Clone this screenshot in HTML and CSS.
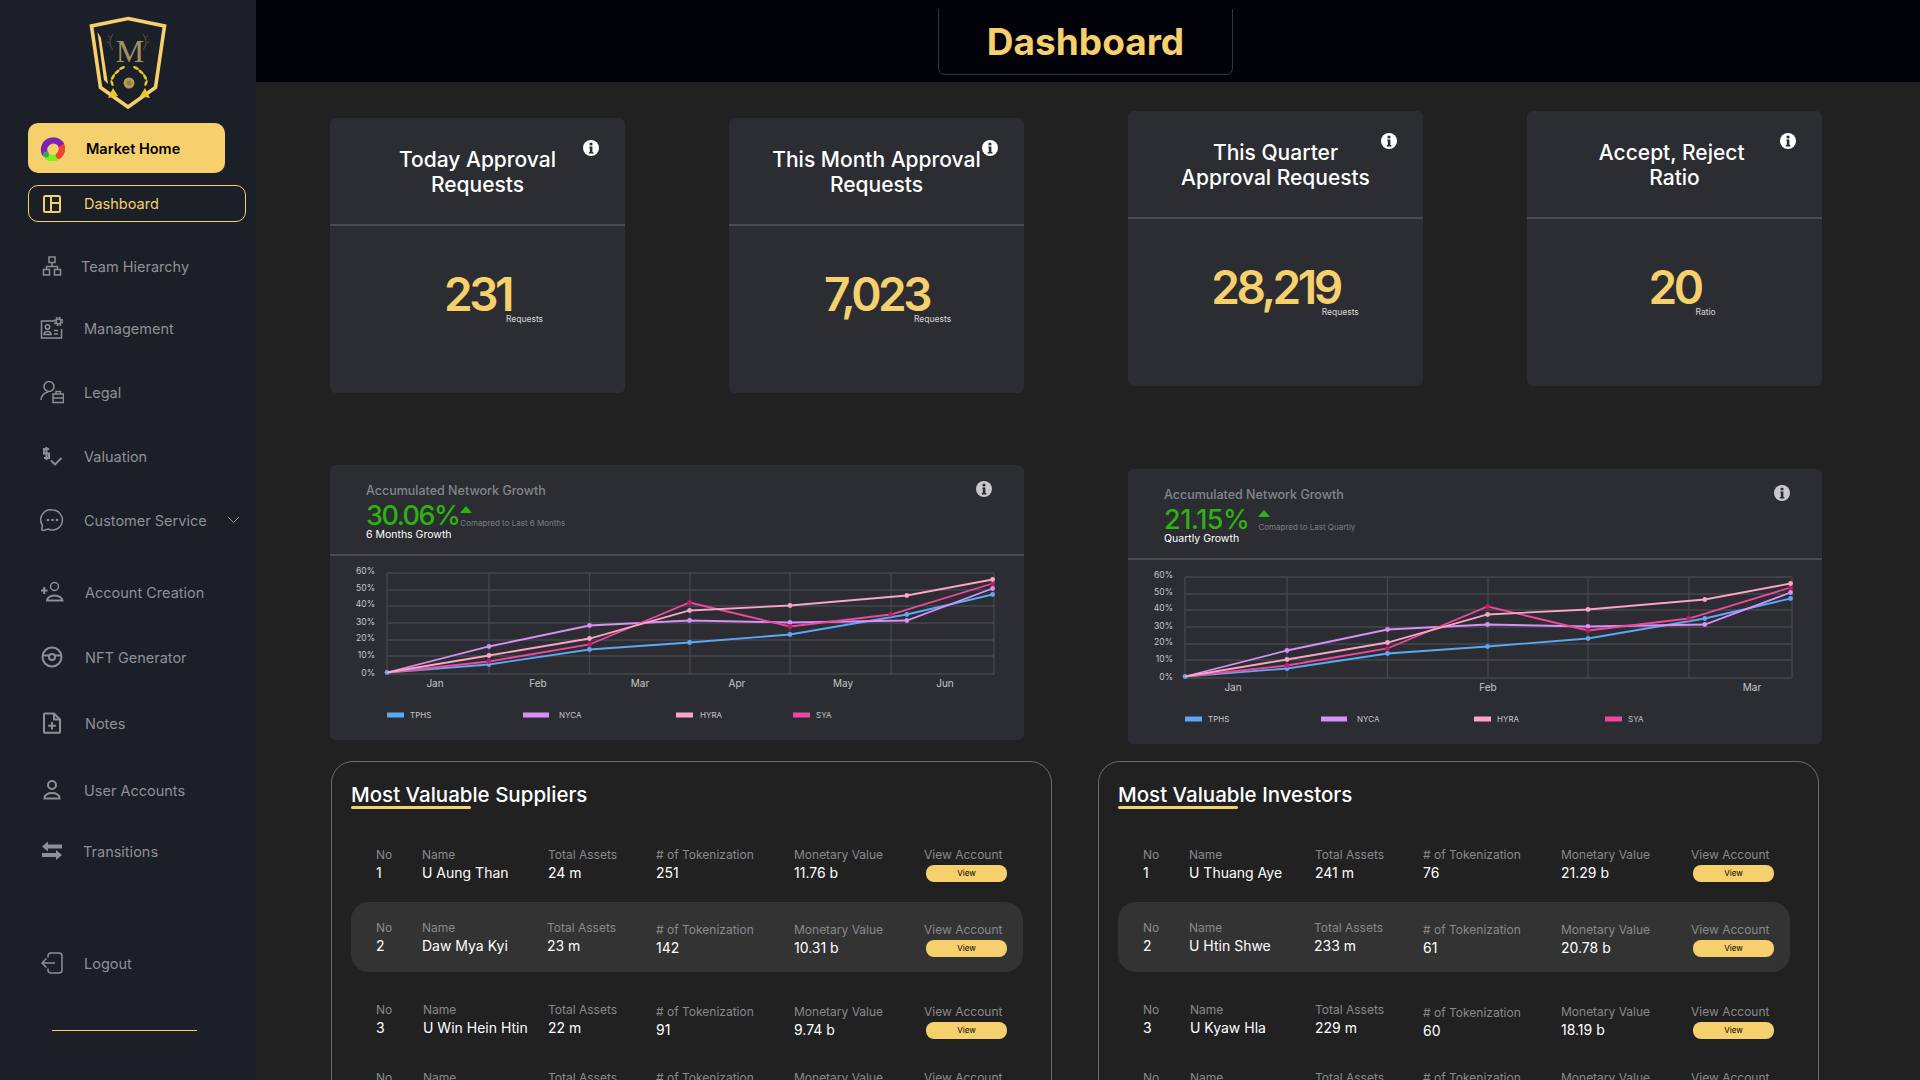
FILE: index.html
```html
<!DOCTYPE html>
<html lang="en">
<head>
  <meta charset="UTF-8" />
  <title>Dashboard</title>
  <link rel="stylesheet" href="styles.css">
</head>
<body>
  <svg class="sprites" width="0" height="0">
    <defs>
      <symbol id="info" viewBox="0 0 16 16">
        <circle cx="8" cy="8" r="8" fill="currentColor" />
        <circle cx="8" cy="4" r="1.600" fill="#2c2d33" />
        <path d="M6.400 6.600h3v5.400h1v1.500H5.800V12h1V8h-.4z" fill="#2c2d33" />
      </symbol>
      <symbol id="plot" viewBox="0 0 694 184">
        <path class="grid" d="M57 17H664M57 34H664M57 50H664M57 67H664M57 84H664M57 100H664M57 118H664M57 17V118M159 17V118M259.500 17V118M360 17V118M460 17V118M561 17V118M664 17V118" />
        <polyline class="line tphs" points="57,116.500 159,108.500 259.500,93.500 359.600,86.500 460,78.500 576.800,58.500 662.600,38.500" />
        <g class="dots tphs"><circle cx="57" cy="116.500" r="2.400" /><circle cx="159" cy="108.500" r="2.400" /><circle cx="259.500" cy="93.500" r="2.400" /><circle cx="359.600" cy="86.500" r="2.400" /><circle cx="460" cy="78.500" r="2.400" /><circle cx="576.800" cy="58.500" r="2.400" /><circle cx="662.600" cy="38.500" r="2.400" /></g>
        <polyline class="line nyca" points="57,116.500 159,90.500 259.500,69.500 359.600,64.500 460,66.500 576.800,64.500 662.600,32.500" />
        <g class="dots nyca"><circle cx="159" cy="90.500" r="2.400" /><circle cx="259.500" cy="69.500" r="2.400" /><circle cx="359.600" cy="64.500" r="2.400" /><circle cx="460" cy="66.500" r="2.400" /><circle cx="576.800" cy="64.500" r="2.400" /><circle cx="662.600" cy="32.500" r="2.400" /></g>
        <polyline class="line sya" points="57,116.500 159,105.500 259.500,88.500 359.600,46.500 460,70.500 560.700,58.500 662.600,27.500" />
        <g class="dots sya-dot"><circle cx="159" cy="105.500" r="2.400" /><circle cx="259.500" cy="88.500" r="2.400" /><circle cx="359.600" cy="46.500" r="2.400" /><circle cx="460" cy="70.500" r="2.400" /><circle cx="560.700" cy="58.500" r="2.400" /><circle cx="662.600" cy="27.500" r="2.400" /></g>
        <polyline class="line hyra" points="57,116.500 159,99.500 259.500,82.500 359.600,54.500 460,49.500 576.800,39.500 662.600,23.500" />
        <g class="dots hyra"><circle cx="159" cy="99.500" r="2.400" /><circle cx="259.500" cy="82.500" r="2.400" /><circle cx="359.600" cy="54.500" r="2.400" /><circle cx="460" cy="49.500" r="2.400" /><circle cx="576.800" cy="39.500" r="2.400" /><circle cx="662.600" cy="23.500" r="2.400" /></g>
        <rect class="tphs-box" x="57" y="156.500" width="17" height="5" />
        <rect class="nyca-box" x="193" y="156.500" width="26" height="5" />
        <rect class="hyra-box" x="346" y="156.500" width="17" height="5" />
      </symbol>
    </defs>
  </svg>

  <div class="app">
    <aside class="sidebar">
      <svg class="logo" width="78" height="96" viewBox="89 15 78 96">
        <polygon points="128,18.500 164.500,26 155.500,87.500 128,107 100.500,87.500 91.500,26" fill="none" stroke="#f6d06c" stroke-width="3.600" />
        <polygon points="97.500,32 101,38 108,84 104,80" fill="#f6d06c" />
        <text x="130" y="62" class="logo-m">M</text>
        <path d="M113 34c-4 5-4 11 0 16M112 38l-4-2M111 43l-4-1M143 34c4 5 4 11 0 16M144 38l4-2M145 43l4-1" fill="none" stroke="#4d4833" stroke-width="1.200" />
        <circle cx="129" cy="83" r="5.500" fill="#b39a55" />
        <circle cx="129" cy="83" r="2.400" fill="#95803f" />
        <g fill="#e7c92d">
          <ellipse cx="122" cy="68" rx="3.200" ry="1.300" transform="rotate(-25 122 68)" />
          <ellipse cx="117" cy="72" rx="3.200" ry="1.300" transform="rotate(-40 117 72)" />
          <ellipse cx="113" cy="77" rx="3.200" ry="1.300" transform="rotate(-60 113 77)" />
          <ellipse cx="112" cy="83" rx="3.200" ry="1.300" transform="rotate(70 112 83)" />
          <ellipse cx="136" cy="68" rx="3.200" ry="1.300" transform="rotate(25 136 68)" />
          <ellipse cx="141" cy="72" rx="3.200" ry="1.300" transform="rotate(40 141 72)" />
          <ellipse cx="145" cy="77" rx="3.200" ry="1.300" transform="rotate(60 145 77)" />
          <ellipse cx="146" cy="83" rx="3.200" ry="1.300" transform="rotate(-70 146 83)" />
          <path d="M113 88l-5 10 10-2zM145 88l5 10-10-2z" />
        </g>
      </svg>

      <a class="market-btn" href="#">
        <svg width="25" height="25" viewBox="0 0 25 25" fill="none" stroke-width="6.400">
          <path d="M19 19.500a9.250 9.250 0 0 1-12.500 .5" stroke="#7df01c" />
          <path d="M21.300 9.500a9.250 9.250 0 0 1-2.300 10" stroke="#ef4136" stroke-linecap="round" />
          <path d="M5.200 18.200a9.250 9.250 0 1 1 16.200-9" stroke="#7b22b5" />
          <circle cx="6" cy="18.600" r="3" fill="#2fa84f" stroke="none" />
        </svg>
        <span>Market Home</span>
      </a>

      <a class="dash-btn" href="#">
        <svg width="18" height="18" viewBox="0 0 18 18" fill="none" stroke="#f6d06c" stroke-width="2">
          <rect x="1" y="1" width="16" height="16" rx="1.500" />
          <path d="M8 1v16M8 8h9" />
        </svg>
        <span>Dashboard</span>
      </a>

      <nav class="nav">
        <a class="nav-item" href="#">
          <svg class="nav-icon" width="24" height="24" viewBox="0 0 24 24"><rect x="9" y="3" width="6" height="5.500" /><path d="M12 8.500v4M6.500 15.500v-3h11v3" /><rect x="3.500" y="15.500" width="6" height="5.500" /><rect x="14.500" y="15.500" width="6" height="5.500" /></svg>
          <span class="nav-team">Team Hierarchy</span>
        </a>
        <a class="nav-item step-up" href="#">
          <svg class="nav-icon" width="24" height="24" viewBox="0 0 24 24"><path d="M14 5H1.500v17h20v-9" /><circle cx="7.500" cy="11" r="2.200" /><path d="M4 18.500c0-4 7-4 7 0zM14 14.500h4M14 18h4" /><circle cx="18.500" cy="5.500" r="2.500" /><circle cx="18.500" cy="5.500" r="4" stroke-dasharray="2 1.100" /></svg>
          <span>Management</span>
        </a>
        <a class="nav-item" href="#">
          <svg class="nav-icon" width="24" height="24" viewBox="0 0 24 24"><circle cx="9" cy="6.500" r="5" /><path d="M1 20c0-4 3-7.500 7-8" /><rect x="13" y="14" width="10.500" height="8.500" /><path d="M16 14v-2.500h4.500V14M13 18h10.500" /></svg>
          <span>Legal</span>
        </a>
        <a class="nav-item" href="#">
          <svg class="nav-icon" width="24" height="24" viewBox="0 0 24 24"><path d="M9 5H4v4.500h5V14H4M6.500 3v13" stroke-width="2" /><path d="M11 16.500l4 4 6.500-6.500" stroke-width="1.800" /></svg>
          <span>Valuation</span>
        </a>
        <a class="nav-item" href="#">
          <svg class="nav-icon" width="24" height="24" viewBox="0 0 24 24"><path d="M12.500 2a10 10 0 1 1-4.500 19l-4.500 1.500c-1 0-1.800-.6-1.800-1.500l.8-3.500A10 10 0 0 1 12.500 2z" /><circle cx="8" cy="12" r=".6" /><circle cx="12.500" cy="12" r=".6" /><circle cx="17" cy="12" r=".6" /></svg>
          <span class="nav-nowrap">Customer Service</span>
          <svg class="nav-chevron" width="13" height="8" viewBox="0 0 13 8"><path d="M1 1l5.500 5.500L12 1" /></svg>
        </a>
        <a class="nav-item wide step-large" href="#">
          <svg class="nav-icon" width="24" height="24" viewBox="0 0 24 24"><circle cx="14.500" cy="6.500" r="4" /><path d="M7 20.500c0-2 2.500-5 7.500-5s8 3 8 5zM1 10.500h6.500M4.200 7v7" stroke-width="2" /></svg>
          <span>Account Creation</span>
        </a>
        <a class="nav-item wide step-a" href="#">
          <svg class="nav-icon" width="24" height="24" viewBox="0 0 24 24"><circle cx="12" cy="12" r="9.500" stroke-width="2" /><circle cx="12" cy="12" r="3" stroke-width="2" /><path d="M3 10.500h6M15 10.500h6" stroke-width="2" /></svg>
          <span>NFT Generator</span>
        </a>
        <a class="nav-item wide step-b" href="#">
          <svg class="nav-icon" width="24" height="24" viewBox="0 0 24 24"><path d="M5 2.500h9l6 6V21a.8.8 0 0 1-.8.800H4.800A.8.800 0 0 1 4 21V3.500a1 1 0 0 1 1-1zM14 2.500v6h6M12 11v7.500M8.200 14.800h7.600" stroke-width="2" /></svg>
          <span>Notes</span>
        </a>
        <a class="nav-item step-c" href="#">
          <svg class="nav-icon" width="24" height="24" viewBox="0 0 24 24"><circle cx="12" cy="7" r="4" stroke-width="2" /><path d="M4.500 20.500v-1c0-2.500 3.500-4.500 7.500-4.500s7.500 2 7.500 4.500v1z" stroke-width="2" /></svg>
          <span>User Accounts</span>
        </a>
        <a class="nav-item tight step-d" href="#">
          <svg class="nav-icon" width="24" height="24" viewBox="0 0 24 24"><path d="M22 7.500H8M2 16h14" stroke-width="4" /><path class="solid" d="M8 2.500L2 7.500 8 12.500zM16 11l6 5-6 5z" /></svg>
          <span>Transitions</span>
        </a>
        <a class="nav-item step-e" href="#">
          <svg class="nav-icon" width="24" height="24" viewBox="0 0 24 24"><path d="M8 6.500V5a3 3 0 0 1 3-3h8a3 3 0 0 1 3 3v14a3 3 0 0 1-3 3h-8a3 3 0 0 1-3-3v-1.500M15 12H2M6.500 7.500L2 12l4.500 4.500" /></svg>
          <span>Logout</span>
        </a>
      </nav>
      <div class="side-line"></div>
    </aside>

    <main class="main">
      <header class="topbar">
        <h1 class="page-title">Dashboard</h1>
      </header>

      <div class="content">
        <section class="stat-row">
          <article class="stat-card low">
            <svg class="info" width="16" height="16"><use href="#info" /></svg>
            <h2 class="stat-title">Today Approval<br>Requests</h2>
            <div class="stat-body"><div class="stat-value">231<span class="stat-note">Requests</span></div></div>
          </article>
          <article class="stat-card low">
            <svg class="info" width="16" height="16"><use href="#info" /></svg>
            <h2 class="stat-title">This Month Approval<br>Requests</h2>
            <div class="stat-body"><div class="stat-value">7,023<span class="stat-note long">Requests</span></div></div>
          </article>
          <article class="stat-card">
            <svg class="info" width="16" height="16"><use href="#info" /></svg>
            <h2 class="stat-title">This Quarter<br>Approval Requests</h2>
            <div class="stat-body"><div class="stat-value">28,219<span class="stat-note longer">Requests</span></div></div>
          </article>
          <article class="stat-card">
            <svg class="info" width="16" height="16"><use href="#info" /></svg>
            <h2 class="stat-title">Accept, Reject&nbsp;<br>Ratio</h2>
            <div class="stat-body"><div class="stat-value">20<span class="stat-note">Ratio</span></div></div>
          </article>
        </section>

        <section class="chart-row">
          <article class="chart-card">
            <svg class="info muted" width="16" height="16"><use href="#info" /></svg>
            <div class="chart-head">
              <div class="chart-title">Accumulated Network Growth</div>
              <div class="growth">
                <span class="growth-pct">30.06%</span>
                <div class="growth-side">
                  <span class="triangle"></span>
                  <span class="growth-note">Comapred to Last 6 Months</span>
                </div>
              </div>
              <div class="growth-label">6 Months Growth</div>
            </div>
            <svg class="plot" width="694" height="184" viewBox="0 0 694 184">
              <use href="#plot" width="694" height="184" />
              <g class="y-labels"><text x="45" y="18">60%</text><text x="45" y="35">50%</text><text x="45" y="51">40%</text><text x="45" y="69">30%</text><text x="45" y="85">20%</text><text x="45" y="102">10%</text><text x="45" y="120">0%</text></g>
              <g class="x-labels"><text x="105" y="131">Jan</text><text x="208" y="131">Feb</text><text x="310" y="131">Mar</text><text x="407" y="131">Apr</text><text x="513" y="131">May</text><text x="615" y="131">Jun</text></g>
              <rect class="sya-box" x="463" y="156.500" width="17" height="5" />
              <g class="legend"><text x="80" y="162">TPHS</text><text x="229" y="162">NYCA</text><text x="370" y="162">HYRA</text><text x="486" y="162">SYA</text></g>
            </svg>
          </article>

          <article class="chart-card low-small">
            <svg class="info muted" width="16" height="16"><use href="#info" /></svg>
            <div class="chart-head">
              <div class="chart-title">Accumulated Network Growth</div>
              <div class="growth">
                <span class="growth-pct wide">21.15%</span>
                <div class="growth-side spaced">
                  <span class="triangle"></span>
                  <span class="growth-note">Comapred to Last Quartly</span>
                </div>
              </div>
              <div class="growth-label">Quartly Growth</div>
            </div>
            <svg class="plot" width="694" height="184" viewBox="0 0 694 184">
              <use href="#plot" width="694" height="184" />
              <g class="y-labels"><text x="45" y="18">60%</text><text x="45" y="35">50%</text><text x="45" y="51">40%</text><text x="45" y="69">30%</text><text x="45" y="85">20%</text><text x="45" y="102">10%</text><text x="45" y="120">0%</text></g>
              <g class="x-labels"><text x="105" y="131">Jan</text><text x="360" y="131">Feb</text><text x="624" y="131">Mar</text></g>
              <rect class="sya-box" x="477" y="156.500" width="17" height="5" />
              <g class="legend"><text x="80" y="162">TPHS</text><text x="229" y="162">NYCA</text><text x="369" y="162">HYRA</text><text x="500" y="162">SYA</text></g>
            </svg>
          </article>
        </section>

        <section class="table-row">
          <article class="panel">
            <h2 class="panel-title">Most Valuable Suppliers</h2>
            <div class="rows">
              <div class="row">
                <div class="cell"><span class="lbl">No</span><span class="val">1</span></div>
                <div class="cell"><span class="lbl">Name</span><span class="val">U Aung Than</span></div>
                <div class="cell"><span class="lbl">Total Assets</span><span class="val">24 m</span></div>
                <div class="cell"><span class="lbl"># of Tokenization</span><span class="val">251</span></div>
                <div class="cell"><span class="lbl">Monetary Value</span><span class="val">11.76 b</span></div>
                <div class="cell"><span class="lbl">View Account</span><a class="view-btn" href="#">View</a></div>
              </div>
              <div class="row active">
                <div class="cell"><span class="lbl">No</span><span class="val">2</span></div>
                <div class="cell"><span class="lbl">Name</span><span class="val">Daw Mya Kyi</span></div>
                <div class="cell shift"><span class="lbl">Total Assets</span><span class="val">23 m</span></div>
                <div class="cell drop"><span class="lbl"># of Tokenization</span><span class="val">142</span></div>
                <div class="cell drop"><span class="lbl">Monetary Value</span><span class="val">10.31 b</span></div>
                <div class="cell drop"><span class="lbl">View Account</span><a class="view-btn" href="#">View</a></div>
              </div>
              <div class="row third">
                <div class="cell"><span class="lbl">No</span><span class="val">3</span></div>
                <div class="cell nudge"><span class="lbl">Name</span><span class="val">U Win Hein Htin</span></div>
                <div class="cell"><span class="lbl">Total Assets</span><span class="val">22 m</span></div>
                <div class="cell drop"><span class="lbl"># of Tokenization</span><span class="val">91</span></div>
                <div class="cell drop"><span class="lbl">Monetary Value</span><span class="val">9.74 b</span></div>
                <div class="cell drop"><span class="lbl">View Account</span><a class="view-btn" href="#">View</a></div>
              </div>
              <div class="row fourth">
                <div class="cell"><span class="lbl">No</span></div>
                <div class="cell nudge"><span class="lbl">Name</span></div>
                <div class="cell"><span class="lbl">Total Assets</span></div>
                <div class="cell"><span class="lbl"># of Tokenization</span></div>
                <div class="cell"><span class="lbl">Monetary Value</span></div>
                <div class="cell"><span class="lbl">View Account</span></div>
              </div>
            </div>
          </article>

          <article class="panel">
            <h2 class="panel-title">Most Valuable Investors</h2>
            <div class="rows">
              <div class="row">
                <div class="cell"><span class="lbl">No</span><span class="val">1</span></div>
                <div class="cell"><span class="lbl">Name</span><span class="val">U Thuang Aye</span></div>
                <div class="cell"><span class="lbl">Total Assets</span><span class="val">241 m</span></div>
                <div class="cell"><span class="lbl"># of Tokenization</span><span class="val">76</span></div>
                <div class="cell"><span class="lbl">Monetary Value</span><span class="val">21.29 b</span></div>
                <div class="cell"><span class="lbl">View Account</span><a class="view-btn" href="#">View</a></div>
              </div>
              <div class="row active">
                <div class="cell"><span class="lbl">No</span><span class="val">2</span></div>
                <div class="cell"><span class="lbl">Name</span><span class="val">U Htin Shwe</span></div>
                <div class="cell shift"><span class="lbl">Total Assets</span><span class="val">233 m</span></div>
                <div class="cell drop"><span class="lbl"># of Tokenization</span><span class="val">61</span></div>
                <div class="cell drop"><span class="lbl">Monetary Value</span><span class="val">20.78 b</span></div>
                <div class="cell drop"><span class="lbl">View Account</span><a class="view-btn" href="#">View</a></div>
              </div>
              <div class="row third">
                <div class="cell"><span class="lbl">No</span><span class="val">3</span></div>
                <div class="cell nudge"><span class="lbl">Name</span><span class="val">U Kyaw Hla</span></div>
                <div class="cell"><span class="lbl">Total Assets</span><span class="val">229 m</span></div>
                <div class="cell drop-more"><span class="lbl"># of Tokenization</span><span class="val">60</span></div>
                <div class="cell drop"><span class="lbl">Monetary Value</span><span class="val">18.19 b</span></div>
                <div class="cell drop"><span class="lbl">View Account</span><a class="view-btn" href="#">View</a></div>
              </div>
              <div class="row fourth">
                <div class="cell"><span class="lbl">No</span></div>
                <div class="cell nudge"><span class="lbl">Name</span></div>
                <div class="cell"><span class="lbl">Total Assets</span></div>
                <div class="cell"><span class="lbl"># of Tokenization</span></div>
                <div class="cell"><span class="lbl">Monetary Value</span></div>
                <div class="cell"><span class="lbl">View Account</span></div>
              </div>
            </div>
          </article>
        </section>
      </div>
    </main>
  </div>
</body>
</html>
```

FILE: styles.css
```css
* {
  box-sizing: border-box;
}

html,
body {
  margin: 0;
  height: 100%;
  overflow: hidden;
}

body {
  font-family: Inter, "Noto Sans", sans-serif;
  background-color: #212121;
  color: #fff;
}

a {
  text-decoration: none;
}

h1,
h2 {
  margin: 0;
}

.sprites {
  position: absolute;
}

.app {
  display: flex;
  height: 1080px;
}

/* sidebar */

.sidebar {
  width: 256px;
  flex: none;
  background-color: #1b1f27;
  padding-top: 15px;
  display: flex;
  flex-direction: column;
}

.logo {
  display: block;
  flex: none;
  margin-left: 89px;
}

.logo-m {
  font-family: "Liberation Serif", serif;
  font-size: 32px;
  fill: #a2925f;
  text-anchor: middle;
}

.market-btn {
  margin: 12px 0 0 28px;
  width: 197px;
  height: 50px;
  flex: none;
  border-radius: 10px;
  background-color: #f6d06c;
  color: #000;
  font-size: 14.500px;
  font-weight: 600;
  padding-left: 12px;
  display: flex;
  align-items: center;
  gap: 21px;
}

.dash-btn {
  margin: 12px 0 0 28px;
  width: 218px;
  height: 37px;
  flex: none;
  border: 1px solid #f6d06c;
  border-radius: 10px;
  color: #f6d06c;
  font-size: 14.500px;
  padding-left: 14px;
  display: flex;
  align-items: center;
  gap: 23px;
}

.nav {
  margin-top: 12px;
  display: flex;
  flex-direction: column;
}

.nav-item {
  height: 64px;
  flex: none;
  padding-left: 40px;
  display: flex;
  align-items: center;
  gap: 20px;
  color: #8f9095;
  font-size: 14.500px;
}

.nav-item.wide {
  gap: 21px;
}

.nav-item.tight {
  gap: 19px;
}

.nav-team {
  margin-left: -3px;
}

.nav-nowrap {
  white-space: nowrap;
}

.step-up {
  margin-top: -2px;
}

.step-large {
  margin-top: 8px;
}

.step-a {
  margin-top: 1px;
}

.step-b {
  margin-top: 2px;
}

.step-c {
  margin-top: 3px;
}

.step-d {
  margin-top: -3px;
}

.step-e {
  margin-top: 48px;
}

.nav-icon {
  flex: none;
  fill: none;
  stroke: #8f9095;
  stroke-width: 1.500;
}

.nav-icon .solid {
  fill: #8f9095;
  stroke: none;
}

.nav-chevron {
  margin-left: auto;
  margin-right: 22px;
  flex: none;
  fill: none;
  stroke: #8f9095;
}

.side-line {
  margin: 35px 0 0 52px;
  width: 145px;
  border-top: 1px solid #f6d06c;
}

/* top bar */

.main {
  flex: 1;
  min-width: 0;
  height: 1080px;
  overflow: hidden;
}

.topbar {
  height: 82px;
  background-color: #01020a;
  display: flex;
  justify-content: center;
  padding-right: 5px;
}

.page-title {
  margin-top: 9px;
  width: 295px;
  height: 66px;
  border: 1px solid #34353a;
  border-top: none;
  border-radius: 0 0 7px 7px;
  color: #f6d06c;
  font-size: 37px;
  font-weight: 700;
  line-height: 66px;
  text-align: center;
}

.content {
  padding: 29px 0 0 74px;
}

/* stat cards */

.stat-row {
  display: flex;
  align-items: flex-start;
  gap: 104px;
}

.stat-card {
  position: relative;
  width: 295px;
  height: 275px;
  flex: none;
  background-color: #2c2d33;
  border-radius: 6px;
}

.stat-card.low {
  margin-top: 7px;
}

.stat-title {
  height: 108px;
  padding-top: 29px;
  border-bottom: 2px solid #4a4b4f;
  font-size: 21px;
  font-weight: 500;
  line-height: 25px;
  text-align: center;
}

.info {
  position: absolute;
  top: 22px;
  right: 26px;
  color: #fff;
}

.info.muted {
  top: 16px;
  right: 32px;
  color: #c9c9cb;
}

.stat-body {
  display: flex;
  justify-content: center;
  padding-top: 45px;
}

.stat-value {
  position: relative;
  color: #f6d06c;
  font-size: 46px;
  font-weight: 600;
  line-height: 46px;
  letter-spacing: -3.500px;
}

.stat-note {
  position: absolute;
  top: calc(100% - 3px);
  left: calc(100% - 5px);
  color: #d8d8d8;
  font-size: 8.500px;
  font-weight: 400;
  line-height: 10px;
  letter-spacing: 0;
}

.stat-note.long {
  left: calc(100% - 15px);
}

.stat-note.longer {
  left: calc(100% - 18px);
}

/* charts */

.chart-row {
  margin-top: 72px;
  display: flex;
  align-items: flex-start;
  gap: 104px;
}

.chart-card {
  position: relative;
  width: 694px;
  height: 275px;
  flex: none;
  background-color: #2c2d33;
  border-radius: 6px;
}

.chart-card.low-small {
  margin-top: 4px;
}

.chart-head {
  height: 91px;
  padding: 18px 0 0 36px;
  border-bottom: 2px solid #4a4b4f;
}

.chart-title {
  color: #85868a;
  font-size: 12.500px;
  font-weight: 500;
  line-height: 16px;
}

.growth {
  margin-top: 4px;
  display: flex;
  align-items: flex-start;
  height: 26px;
}

.growth-pct {
  color: #2cb30e;
  font-size: 27px;
  font-weight: 500;
  line-height: 26px;
  letter-spacing: -1.500px;
}

.growth-pct.wide {
  letter-spacing: -.5px;
}

.growth-side {
  margin-left: 1px;
  padding-top: 3px;
  display: flex;
  flex-direction: column;
  align-items: flex-start;
}

.growth-side.spaced {
  margin-left: 9px;
}

.triangle {
  width: 0;
  height: 0;
  border-left: 6px solid transparent;
  border-right: 6px solid transparent;
  border-bottom: 7px solid #2cb30e;
}

.growth-note {
  margin-top: 5px;
  color: #7d7e82;
  font-size: 8px;
  line-height: 10px;
  white-space: nowrap;
}

.growth-label {
  font-size: 10.500px;
  line-height: 12px;
}

.plot {
  display: block;
}

.grid {
  fill: none;
  stroke: #46474c;
  stroke-width: 1.300;
}

.line {
  fill: none;
  stroke-width: 1.800;
}

.line.tphs {
  stroke: #5ba8f5;
}

.line.nyca {
  stroke: #d990f5;
}

.line.hyra {
  stroke: #f9a5c5;
}

.line.sya {
  stroke: #f0489c;
}

.dots.tphs,
.tphs-box {
  fill: #5ba8f5;
}

.dots.nyca,
.nyca-box {
  fill: #d990f5;
}

.dots.hyra,
.hyra-box {
  fill: #f9a5c5;
}

.dots.sya-dot {
  fill: #c8186a;
}

.sya-box {
  fill: #f0489c;
}

.y-labels text {
  fill: #c6c6c8;
  font-size: 8.500px;
  text-anchor: end;
}

.x-labels text {
  fill: #c6c6c8;
  font-size: 10px;
  text-anchor: middle;
}

.legend text {
  fill: #c6c6c8;
  font-size: 8px;
}

/* tables */

.table-row {
  margin: 17px 0 0 1px;
  display: flex;
  align-items: flex-start;
  gap: 46px;
}

.panel {
  width: 721px;
  height: 400px;
  flex: none;
  border: 1px solid #6c6c6c;
  border-radius: 22px;
  padding: 21px 0 0 19px;
}

.panel-title {
  position: relative;
  display: inline-block;
  height: 24px;
  font-size: 20.500px;
  font-weight: 500;
  line-height: 24px;
}

.panel-title::after {
  content: "";
  position: absolute;
  left: 0;
  top: 23px;
  width: 120px;
  height: 3px;
  border-radius: 2px;
  background-color: #f6d06c;
}

.rows {
  margin-top: 22px;
  width: 672px;
}

.row {
  height: 70px;
  padding: 18px 0 0 25px;
  border-radius: 18px;
  display: grid;
  grid-template-columns: 46px 126px 108px 138px 130px 90px;
  align-items: start;
}

.row + .row {
  margin-top: 3px;
}

.row.active {
  background-color: #333333;
}

.row.third {
  margin-top: 12px;
}

.row.fourth {
  margin-top: -2px;
}

.cell {
  display: flex;
  flex-direction: column;
  align-items: flex-start;
}

.cell.drop {
  margin-top: 2px;
}

.cell.drop-more {
  margin-top: 3px;
}

.cell.shift {
  margin-left: -1px;
}

.cell.nudge {
  margin-left: 1px;
}

.lbl {
  color: #88898c;
  font-size: 12px;
  line-height: 16px;
  white-space: nowrap;
}

.val {
  color: #fff;
  font-size: 14px;
  line-height: 20px;
  white-space: nowrap;
}

.view-btn {
  margin: 2px 0 0 2px;
  width: 81px;
  height: 17px;
  border-radius: 8px;
  background-color: #f6d06c;
  color: #000;
  font-size: 8px;
  line-height: 17px;
  text-align: center;
}
```
